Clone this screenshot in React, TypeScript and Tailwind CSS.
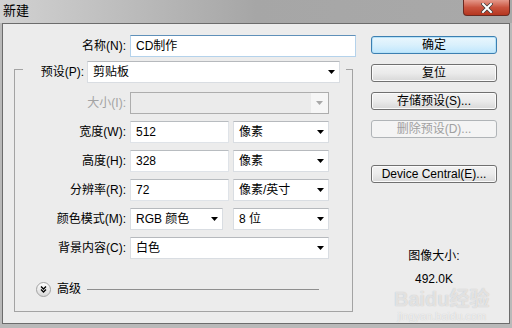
import React from "react";

const FONT = '"Liberation Sans", "Noto Sans CJK SC", sans-serif';

function Arrow({ disabled }: { disabled?: boolean }) {
  return (
    <svg width="7" height="4" viewBox="0 0 7 4" className="shrink-0">
      <polygon points="0,0 7,0 3.5,4" fill={disabled ? "#a8a8a8" : "#000"} />
    </svg>
  );
}

function Select({ text, w, disabled }: { text?: string; w: string; disabled?: boolean }) {
  if (disabled) {
    return (
      <div className={`${w} h-[22px] flex items-stretch border border-[#adadad] bg-[#ebebeb]`}>
        <div className="flex-1" />
        <div className="w-[17px] flex items-center justify-center bg-[#f6f6f6]">
          <Arrow disabled />
        </div>
      </div>
    );
  }
  return (
    <div className={`${w} h-[22px] flex items-center justify-between border border-[#d9dde2] border-t-[#b6b9bd] bg-white pl-[5px] pr-[4px]`}>
      <span>{text}</span>
      <Arrow />
    </div>
  );
}

function Input({ text, w }: { text: string; w: string }) {
  return (
    <div className={`${w} h-[22px] flex items-center border border-[#dfe3e8] border-t-[#b8bcc0] bg-white pl-[5px]`}>
      {text}
    </div>
  );
}

function Row({ label, children, disabled }: { label: string; children: React.ReactNode; disabled?: boolean }) {
  return (
    <div className="flex items-center h-[22px]">
      <div className={`w-[111px] text-right ${disabled ? "text-[#a3a3a3]" : ""}`}>{label}</div>
      <div className="ml-[4px] flex items-center">{children}</div>
    </div>
  );
}

function Button({ text, primary, disabled, className = "" }: { text: string; primary?: boolean; disabled?: boolean; className?: string }) {
  const tone = primary
    ? "border-[#3c7fb1] bg-gradient-to-b from-[#eaf6fd] via-[#d9f0fc] to-[#bee6fd] shadow-[inset_0_0_0_1px_#b6e2f8]"
    : disabled
    ? "border-[#b0b4b7] bg-[#f4f4f4] text-[#a0a0a0]"
    : "border-[#707070] bg-gradient-to-b from-[#f2f2f2] via-[#ebebeb] to-[#d8d8d8] shadow-[inset_0_0_0_1px_#fbfbfb]";
  return (
    <div className={`w-[126px] h-[18px] rounded-[3px] border flex items-center justify-center leading-none ${tone} ${className}`}>
      {text}
    </div>
  );
}

function AdvancedIcon() {
  return (
    <svg width="15" height="15" viewBox="0 0 15 15" className="shrink-0">
      <defs>
        <linearGradient id="adv" x1="0" y1="0" x2="0" y2="1">
          <stop offset="0" stopColor="#ffffff" />
          <stop offset="1" stopColor="#d6d6d6" />
        </linearGradient>
      </defs>
      <circle cx="7.5" cy="7.5" r="7" fill="url(#adv)" stroke="#a2a2a2" />
      <path d="M5 4.5 L7.5 7 L10 4.5 M5 7.5 L7.5 10 L10 7.5" fill="none" stroke="#000" strokeWidth="1.3" />
    </svg>
  );
}

export default function App() {
  return (
    <div
      className="w-[512px] h-[328px] overflow-hidden relative bg-[#b9b9b9] text-[12px] text-black"
      style={{ fontFamily: FONT }}
    >
      {/* title bar */}
      <div className="h-[23px] flex items-start justify-between bg-gradient-to-r from-[#d2d2d2] via-[#a6a6a6] to-[#a9a9a9]">
        <span className="ml-[3px] mt-[3px] text-[13px] leading-[16px]">新建</span>
        <div className="mr-[2px] w-[47px] h-[16px] rounded-b-[4px] border border-t-0 border-[#6a2a22] bg-gradient-to-b from-[#e4988a] via-[#c9533e] to-[#b5361f] flex items-center justify-center">
          <svg width="12" height="10" viewBox="0 0 12 10">
            <path d="M2 1 L10 9 M10 1 L2 9" stroke="#3a3a3a" strokeWidth="3.4" strokeLinecap="square" />
            <path d="M2 1 L10 9 M10 1 L2 9" stroke="#ffffff" strokeWidth="2" strokeLinecap="square" />
          </svg>
        </div>
      </div>

      {/* dialog body */}
      <div className="ml-[2px] mr-[2px] h-[301px] border border-[#6c6c6c] bg-[#ececec] flex">
        {/* left column */}
        <div className="w-[353px] pt-[11px] pl-[11px]">
          <div className="flex items-center h-[22px]">
            <div className="w-[112px] text-right">名称(N):</div>
            <div className="ml-[4px] w-[226px] h-[22px] flex items-center border border-[#b4d2eb] border-t-[#5f90b9] bg-white pl-[5px]">
              CD制作
            </div>
          </div>

          {/* group box */}
          <div className="mt-[12px] w-[339px] h-[243px] border border-[#a3a3a3]">
            <div className="-mt-[9px] ml-[8px] w-[323px] flex items-center bg-[#ececec]">
              <div className="w-[64px] text-right pr-[3px]">预设(P):</div>
              <Select text="剪贴板" w="w-[253px]" />
            </div>

            <div className="mt-[9px] flex flex-col gap-[7px]">
              <Row label="大小(I):" disabled>
                <Select w="w-[199px]" disabled />
              </Row>
              <Row label="宽度(W):">
                <Input text="512" w="w-[99px]" />
                <div className="ml-[4px]"><Select text="像素" w="w-[96px]" /></div>
              </Row>
              <Row label="高度(H):">
                <Input text="328" w="w-[99px]" />
                <div className="ml-[4px]"><Select text="像素" w="w-[96px]" /></div>
              </Row>
              <Row label="分辨率(R):">
                <Input text="72" w="w-[99px]" />
                <div className="ml-[4px]"><Select text="像素/英寸" w="w-[96px]" /></div>
              </Row>
              <Row label="颜色模式(M):">
                <Select text="RGB 颜色" w="w-[93px]" />
                <div className="ml-[10px]"><Select text="8 位" w="w-[96px]" /></div>
              </Row>
              <Row label="背景内容(C):">
                <Select text="白色" w="w-[199px]" />
              </Row>
            </div>

            <div className="mt-[21px] ml-[21px] mr-[33px] flex items-center">
              <AdvancedIcon />
              <span className="ml-[6px]">高级</span>
              <div className="ml-[6px] flex-1 h-px bg-[#8e8e8e]" />
            </div>
          </div>
        </div>

        {/* right column */}
        <div className="ml-[15px] pt-[12px] flex flex-col items-center w-[126px]">
          <Button text="确定" primary />
          <Button text="复位" className="mt-[10px]" />
          <Button text="存储预设(S)..." className="mt-[10px]" />
          <Button text="删除预设(D)..." disabled className="mt-[10px]" />
          <Button text="Device Central(E)..." className="mt-[27px]" />
          <div className="mt-[65px] leading-[16px]">图像大小:</div>
          <div className="mt-[7px] leading-[16px]">492.0K</div>
        </div>
      </div>

      {/* watermark */}
      <div className="absolute left-[394px] top-[290px] flex flex-col items-center pointer-events-none select-none">
        <div className="text-[20px] font-bold leading-[18px] text-white/60 [text-shadow:0_0_1px_#b4b4b4]">Baidu经验</div>
        <div className="mt-[2px] text-[11px] leading-[12px] text-white/70 [text-shadow:0_0_1px_#bcbcbc]">jingyan.baidu.com</div>
      </div>
    </div>
  );
}
